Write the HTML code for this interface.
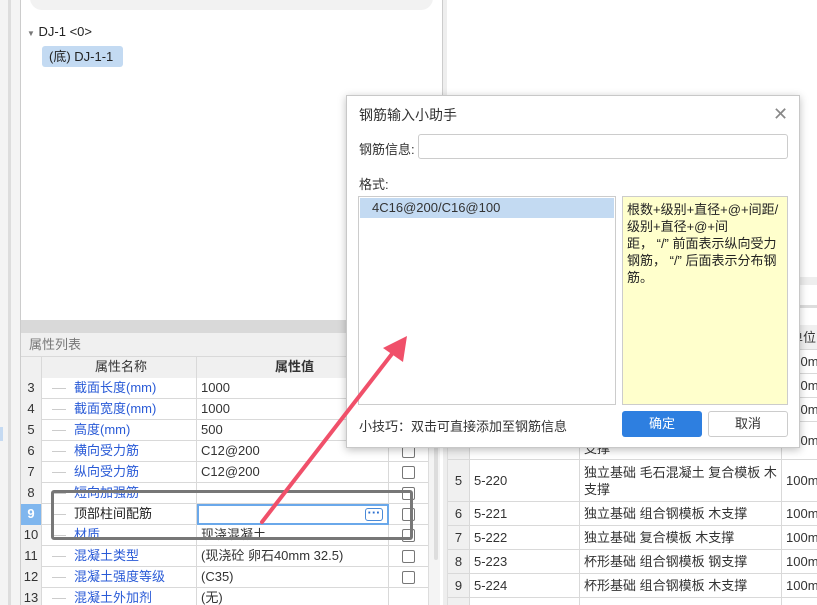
<!DOCTYPE html>
<html><head><meta charset="utf-8"><style>
*{margin:0;padding:0;box-sizing:border-box}
html,body{width:817px;height:605px;overflow:hidden}
body{background:#fff;font-family:"Liberation Sans","Noto Sans CJK SC",sans-serif;font-size:13px;color:#333;position:relative;white-space:nowrap}
.a{position:absolute}
.row{position:absolute;left:21px;width:407px;height:21px;border-bottom:1px solid #d9d9d9}
.row div{position:absolute;top:0;height:21px;line-height:20px}
.n{left:0;width:21px;text-align:center;background:#f0f0f0;border-right:1px solid #d9d9d9}
.nm{left:21px;width:155px;border-right:1px solid #d9d9d9;padding-left:32px;color:#2a5bd7}
.nm.l:before{content:"";position:absolute;left:10px;top:10px;width:14px;border-top:1px solid #ccc}
.v{left:176px;width:192px;border-right:1px solid #d9d9d9;padding-left:4px}
.cb{left:381px;top:4px!important;width:13px;height:13px!important;border:1px solid #777;border-radius:2px;background:#fff}
.rr{position:absolute;left:448px;width:369px;border-bottom:1px solid #d9d9d9;font-size:13px}
.rr div{position:absolute;top:0;bottom:0;border-right:1px solid #d9d9d9;padding-left:4px;line-height:23px;overflow:hidden}
</style></head><body>
<div class="a" style="left:0;top:0;width:20px;height:605px;background:#f4f4f4"></div>
<div class="a" style="left:8px;top:0;width:3px;height:605px;background:#ddd"></div>
<div class="a" style="left:0;top:427px;width:3px;height:14px;background:#c5daf2"></div>
<div class="a" style="left:20px;top:0;width:1px;height:605px;background:#ccc"></div>
<div class="a" style="left:442px;top:0;width:1px;height:320px;background:#ccc"></div>
<div class="a" style="left:443px;top:0;width:4px;height:605px;background:#eee"></div>
<div class="a" style="left:30px;top:-14px;width:403px;height:24px;background:#f2f2f2;border-radius:12px"></div>
<div class="a" style="left:27px;top:24px;font-size:13px;color:#222"><span style="font-size:8px;color:#777">▼</span> DJ-1 &lt;0&gt;</div>
<div class="a" style="left:42px;top:46px;width:81px;height:21px;background:#c3daf2;border-radius:3px;line-height:21px;padding-left:7px;font-size:13px;color:#222">(底) DJ-1-1</div>
<div class="a" style="left:21px;top:320px;width:422px;height:13px;background:#d9d9d9"></div>
<div class="a" style="left:21px;top:333px;width:407px;height:24px;background:#f0f0f0;line-height:24px;padding-left:8px;color:#777;border-bottom:1px solid #d9d9d9">属性列表</div>
<div class="row" style="top:357px"><div class="n"></div><div class="nm" style="padding-left:53px;color:#333;background:#f0f0f0">属性名称</div><div class="v" style="text-align:center;font-weight:bold;background:#f0f0f0">属性值</div><div style="left:368px;width:39px;background:#f0f0f0"></div></div>
<div class="row" style="top:378px"><div class="n">3</div><div class="nm l">截面长度(mm)</div><div class="v">1000</div></div>
<div class="row" style="top:399px"><div class="n">4</div><div class="nm l">截面宽度(mm)</div><div class="v">1000</div></div>
<div class="row" style="top:420px"><div class="n">5</div><div class="nm l">高度(mm)</div><div class="v">500</div></div>
<div class="row" style="top:441px"><div class="n">6</div><div class="nm l">横向受力筋</div><div class="v">C12@200</div><div class="cb"></div></div>
<div class="row" style="top:462px"><div class="n">7</div><div class="nm l">纵向受力筋</div><div class="v">C12@200</div><div class="cb"></div></div>
<div class="row" style="top:483px"><div class="n">8</div><div class="nm l">短向加强筋</div><div class="v"></div><div class="cb"></div></div>
<div class="row" style="top:504px"><div class="n" style="background:#7fb6ee;color:#fff;font-weight:bold">9</div><div class="nm l" style="color:#222">顶部柱间配筋</div><div class="v" style="border:2px solid #6aa8ea"><span style="position:absolute;right:4px;top:2px;width:18px;height:13px;border:1px solid #4a8ad8;border-radius:3px;line-height:7px;text-align:center;color:#2a6fd0;font-weight:bold">···</span></div><div class="cb"></div></div>
<div class="row" style="top:525px"><div class="n">10</div><div class="nm l">材质</div><div class="v">现浇混凝土</div><div class="cb"></div></div>
<div class="row" style="top:546px"><div class="n">11</div><div class="nm l">混凝土类型</div><div class="v">(现浇砼 卵石40mm 32.5)</div><div class="cb"></div></div>
<div class="row" style="top:567px"><div class="n">12</div><div class="nm l">混凝土强度等级</div><div class="v">(C35)</div><div class="cb"></div></div>
<div class="row" style="top:588px"><div class="n">13</div><div class="nm l">混凝土外加剂</div><div class="v">(无)</div></div>
<div class="a" style="left:428px;top:357px;width:12px;height:248px;background:#f4f4f4;border-left:1px solid #ddd"></div>
<div class="a" style="left:434px;top:360px;width:4px;height:200px;background:#ddd;border-radius:2px"></div>
<div class="a" style="left:51px;top:490px;width:362px;height:50px;border:3px solid #777;border-radius:3px"></div>
<div class="a" style="left:447px;top:277px;width:370px;height:8px;background:#eee"></div>
<div class="a" style="left:447px;top:305px;width:370px;height:3px;background:#ddd"></div>
<div class="a" style="left:447px;top:325px;width:370px;height:280px;border-left:3px solid #ddd"></div>
<div class="rr" style="top:325px;height:25px;background:#f0f0f0"><div style="left:334px;border:none;line-height:25px;padding-left:8px">单位</div></div>
<div class="rr" style="top:350px;height:24px"><div style="left:334px;border:none">100m3</div></div>
<div class="rr" style="top:374px;height:24px"><div style="left:334px;border:none">100m3</div></div>
<div class="rr" style="top:398px;height:24px"><div style="left:334px;border:none">100m3</div></div>
<div class="rr" style="top:422px;height:38px"><div style="left:0;width:22px;background:#f0f0f0"></div><div style="left:22px;width:110px"></div><div style="left:132px;width:202px;line-height:17px;padding-top:18px">支撑</div><div style="left:334px;border:none;line-height:38px">100m</div></div>
<div class="rr" style="top:460px;height:42px"><div style="left:0;width:22px;background:#f0f0f0;text-align:center;padding:0;line-height:42px">5</div><div style="left:22px;width:110px;line-height:42px">5-220</div><div style="left:132px;width:202px;line-height:17px;padding-top:4px;white-space:normal">独立基础 毛石混凝土 复合模板 木支撑</div><div style="left:334px;border:none;line-height:42px">100m</div></div>
<div class="rr" style="top:502px;height:24px"><div style="left:0;width:22px;background:#f0f0f0;text-align:center;padding:0">6</div><div style="left:22px;width:110px">5-221</div><div style="left:132px;width:202px">独立基础 组合钢模板 木支撑</div><div style="left:334px;border:none">100m</div></div>
<div class="rr" style="top:526px;height:24px"><div style="left:0;width:22px;background:#f0f0f0;text-align:center;padding:0">7</div><div style="left:22px;width:110px">5-222</div><div style="left:132px;width:202px">独立基础 复合模板 木支撑</div><div style="left:334px;border:none">100m</div></div>
<div class="rr" style="top:550px;height:24px"><div style="left:0;width:22px;background:#f0f0f0;text-align:center;padding:0">8</div><div style="left:22px;width:110px">5-223</div><div style="left:132px;width:202px">杯形基础 组合钢模板 钢支撑</div><div style="left:334px;border:none">100m</div></div>
<div class="rr" style="top:574px;height:24px"><div style="left:0;width:22px;background:#f0f0f0;text-align:center;padding:0">9</div><div style="left:22px;width:110px">5-224</div><div style="left:132px;width:202px">杯形基础 组合钢模板 木支撑</div><div style="left:334px;border:none">100m</div></div>
<div class="rr" style="top:598px;height:7px;border-bottom:none"><div style="left:0;width:22px;background:#f0f0f0"></div><div style="left:22px;width:110px"></div><div style="left:132px;width:202px"></div></div>
<div class="a" style="left:346px;top:95px;width:454px;height:353px;background:#fff;border:1px solid #c8c8c8;box-shadow:0 2px 8px rgba(0,0,0,.25)"></div>
<div class="a" style="left:359px;top:105px;font-size:14px;color:#333">钢筋输入小助手</div>
<div class="a" style="left:773px;top:104px;font-size:18px;color:#888;line-height:20px">✕</div>
<div class="a" style="left:359px;top:139px;font-size:13px">钢筋信息:</div>
<div class="a" style="left:418px;top:134px;width:370px;height:25px;border:1px solid #ccc;border-radius:3px"></div>
<div class="a" style="left:359px;top:174px;font-size:13px">格式:</div>
<div class="a" style="left:358px;top:196px;width:258px;height:209px;border:1px solid #ccc"></div>
<div class="a" style="left:360px;top:198px;width:254px;height:20px;background:#c3daf2;line-height:20px;padding-left:12px;font-size:13px">4C16@200/C16@100</div>
<div class="a" style="left:622px;top:196px;width:166px;height:209px;border:1px solid #ccc;background:#ffffcc;padding:4px 4px;font-size:13px;line-height:17px;color:#222;white-space:normal">根数+级别+直径+@+间距/<br>级别+直径+@+间<br>距，&nbsp;“/”&nbsp;前面表示纵向受力<br>钢筋，&nbsp;“/”&nbsp;后面表示分布钢<br>筋。</div>
<div class="a" style="left:359px;top:416px;font-size:13px">小技巧：双击可直接添加至钢筋信息</div>
<div class="a" style="left:622px;top:411px;width:80px;height:26px;background:#2e7fe0;border-radius:3px;color:#fff;text-align:center;line-height:26px;font-size:13px">确定</div>
<div class="a" style="left:708px;top:411px;width:80px;height:26px;border:1px solid #ccc;border-radius:3px;text-align:center;line-height:24px;font-size:13px">取消</div>
<svg class="a" style="left:0;top:0" width="817" height="605"><line x1="262" y1="522" x2="395" y2="350" stroke="#f0506a" stroke-width="4" stroke-linecap="round"/><polygon points="407,336 383,348 403,362" fill="#f0506a"/></svg>
</body></html>
